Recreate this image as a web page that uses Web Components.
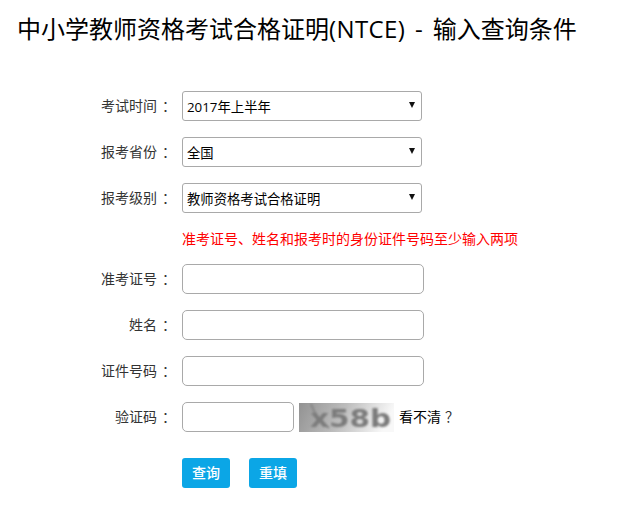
<!DOCTYPE html>
<html lang="zh-CN">
<head>
<meta charset="utf-8">
<title>NTCE</title>
<style>
  html, body { margin: 0; background: #fff; }
  body {
    font-family: "Open Sans", "Noto Sans CJK SC", sans-serif;
    color: #333;
  }
  /* heading latin part runs a bit wider in the original */
  .latin { letter-spacing: 0.4px; word-spacing: 3px; }
</style>
</head>
<body>
<ntce-page>
  <span slot="heading">中小学教师资格考试合格证明<span class="latin">(NTCE) - </span>输入查询条件</span>
  <ntce-row label="考试时间"><ntce-select value="2017年上半年"></ntce-select></ntce-row>
  <ntce-row label="报考省份"><ntce-select value="全国"></ntce-select></ntce-row>
  <ntce-row label="报考级别"><ntce-select value="教师资格考试合格证明"></ntce-select></ntce-row>
  <ntce-note>准考证号、姓名和报考时的身份证件号码至少输入两项</ntce-note>
  <ntce-row label="准考证号"><ntce-input></ntce-input></ntce-row>
  <ntce-row label="姓名"><ntce-input></ntce-input></ntce-row>
  <ntce-row label="证件号码"><ntce-input></ntce-input></ntce-row>
  <ntce-row label="验证码">
    <ntce-input short></ntce-input>
    <ntce-captcha></ntce-captcha>
  </ntce-row>
  <ntce-actions>
    <ntce-button>查询</ntce-button>
    <ntce-button>重填</ntce-button>
  </ntce-actions>
</ntce-page>

<script>
// small helper, every element gets an open shadow root with its own css
class Base extends HTMLElement {
    constructor() {
        super();
        this.attachShadow({mode: 'open'});
    }
    render(html) {
        this.shadowRoot.innerHTML = html;
    }
}

class NtcePage extends Base {
    connectedCallback() {
        this.render(`
            <style>
                :host { display: block; padding: 0 18px; box-sizing: border-box; width: 618px; }
                h1 {
                    margin: 0 0 0 -1px;
                    padding-top: 12px;
                    height: 91px;
                    box-sizing: border-box;
                    font-size: 24px;
                    line-height: 34px;
                    font-weight: 400;
                    color: #000;
                    white-space: nowrap;
                }
            </style>
            <h1><slot name="heading"></slot></h1>
            <slot></slot>
        `);
    }
}

class NtceRow extends Base {
    connectedCallback() {
        this.render(`
            <style>
                :host { display: flex; align-items: center; height: 30px; margin-bottom: 16px; }
                label {
                    flex: none;
                    width: 158px;
                    margin-right: 6px;
                    padding-bottom: 2px;
                    text-align: right;
                    font-size: 14px;
                    color: #333;
                    white-space: nowrap;
                }
                /* colon sits in the middle of its cell in the original */
                .colon { padding-left: 5px; }
                .fields { display: flex; align-items: center; }
            </style>
            <label>${this.getAttribute('label')}<span class="colon">：</span></label>
            <div class="fields"><slot></slot></div>
        `);
    }
}

class NtceSelect extends Base {
    connectedCallback() {
        this.render(`
            <style>
                :host { display: block; position: relative; width: 240px; height: 30px; }
                select {
                    appearance: none;
                    -webkit-appearance: none;
                    display: block;
                    width: 100%;
                    height: 100%;
                    margin: 0;
                    padding: 1px 4px 0;
                    background: #fff;
                    border: 1px solid #a9a9a9;
                    border-radius: 3px;
                    font: 13.33px "Open Sans", "Noto Sans CJK SC", sans-serif;
                    color: #000;
                }
                /* drawn over the select, native arrow is removed */
                .arrow {
                    position: absolute;
                    top: 11px;
                    right: 7px;
                    border-left: 3px solid transparent;
                    border-right: 3px solid transparent;
                    border-top: 6px solid #111;
                }
            </style>
            <select><option>${this.getAttribute('value')}</option></select>
            <span class="arrow"></span>
        `);
    }
}

class NtceInput extends Base {
    connectedCallback() {
        this.render(`
            <style>
                :host { display: block; width: 242px; height: 30px; }
                :host([short]) { width: 112px; }
                input {
                    display: block;
                    width: 100%;
                    height: 100%;
                    margin: 0;
                    padding: 0 6px;
                    box-sizing: border-box;
                    background: #fff;
                    border: 1px solid #a9a9a9;
                    border-radius: 5px;
                    outline: none;
                    font: 13px "Open Sans", "Noto Sans CJK SC", sans-serif;
                }
            </style>
            <input type="text">
        `);
    }
}

class NtceCaptcha extends Base {
    connectedCallback() {
        this.render(`
            <style>
                :host { display: flex; align-items: center; margin-left: 5px; }
                svg { display: block; }
                a {
                    margin-left: 5px;
                    padding-bottom: 2px;
                    font-size: 14px;
                    color: #000;
                    text-decoration: none;
                    white-space: nowrap;
                }
                .q { padding-left: 4px; color: #333; }
            </style>
            <svg width="95" height="29" viewBox="0 0 95 29">
                <defs>
                    <linearGradient id="bg" x1="0" x2="1" y1="0" y2="0.15">
                        <stop offset="0" stop-color="#929292"/>
                        <stop offset="0.5" stop-color="#bdbdbd"/>
                        <stop offset="1" stop-color="#f8f8f8"/>
                    </linearGradient>
                    <filter id="soft"><feGaussianBlur stdDeviation="0.8"/></filter>
                </defs>
                <rect width="95" height="29" fill="url(#bg)"/>
                <g filter="url(#soft)" fill="#7c7c7c">
                    <path d="M12 1 Q16 14 30 25" fill="none" stroke="#858585" stroke-width="2"/>
                    <text x="11" y="24" font-family="DejaVu Sans" font-weight="700" font-size="24" textLength="81" lengthAdjust="spacingAndGlyphs">x58b</text>
                </g>
            </svg>
            <a href="#">看不清<span class="q">？</span></a>
        `);
    }
}

class NtceNote extends Base {
    connectedCallback() {
        this.render(`
            <style>
                :host {
                    display: block;
                    margin: 0 0 0 164px;
                    height: 35px;
                    line-height: 20px;
                    font-size: 14px;
                    color: #f00;
                    white-space: nowrap;
                }
            </style>
            <slot></slot>
        `);
    }
}

class NtceActions extends Base {
    connectedCallback() {
        this.render(`
            <style>
                :host { display: flex; gap: 19px; margin: 26px 0 0 164px; }
            </style>
            <slot></slot>
        `);
    }
}

class NtceButton extends Base {
    connectedCallback() {
        this.render(`
            <style>
                :host { display: block; }
                button {
                    display: block;
                    width: 48px;
                    height: 30px;
                    padding: 0 0 2px;
                    background: #0ba6e6;
                    border: 0;
                    border-radius: 3px;
                    color: #fff;
                    font: 500 14px "Open Sans", "Noto Sans CJK SC", sans-serif;
                }
            </style>
            <button type="button"><slot></slot></button>
        `);
    }
}

customElements.define('ntce-page', NtcePage);
customElements.define('ntce-row', NtceRow);
customElements.define('ntce-select', NtceSelect);
customElements.define('ntce-input', NtceInput);
customElements.define('ntce-captcha', NtceCaptcha);
customElements.define('ntce-note', NtceNote);
customElements.define('ntce-actions', NtceActions);
customElements.define('ntce-button', NtceButton);
</script>
</body>
</html>
